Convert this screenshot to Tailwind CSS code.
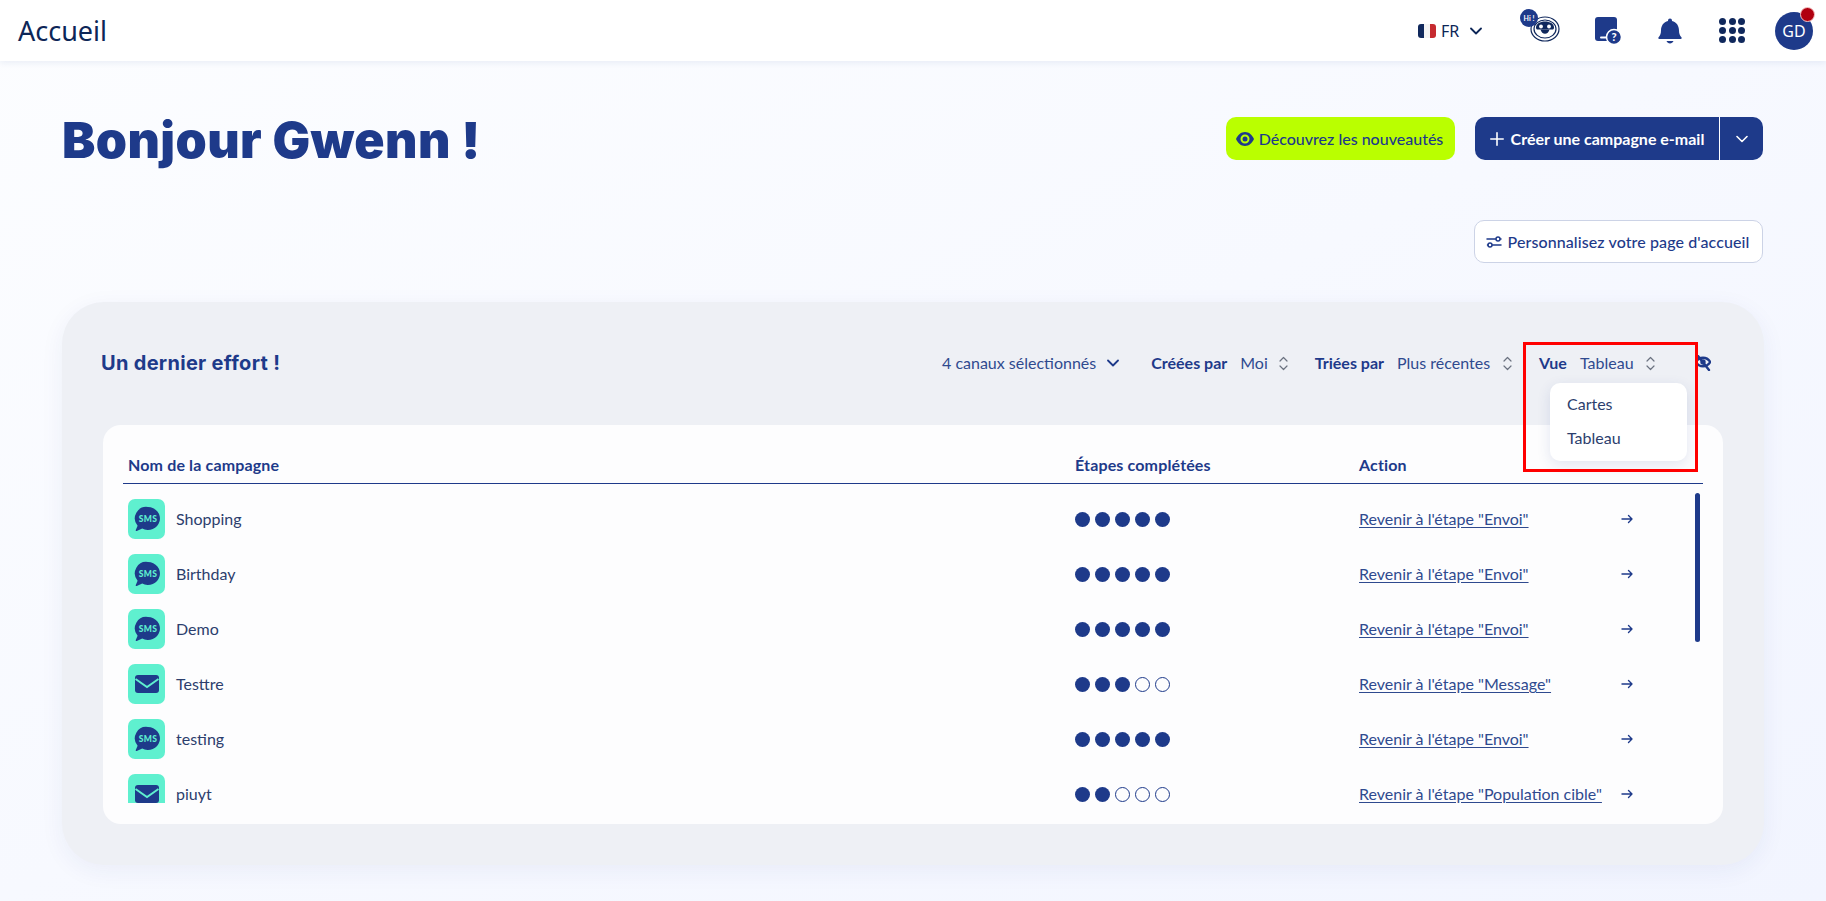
<!DOCTYPE html>
<html lang="fr">
<head>
<meta charset="utf-8">
<title>Accueil</title>
<script src="https://cdn.jsdelivr.net/npm/@tailwindcss/browser@4"></script>
</head>
<body class="m-0 h-[901px] w-[1826px] overflow-hidden bg-gradient-to-br from-[#fcfdff] to-[#f2f5ff] font-['Lato','Noto_Sans',sans-serif] text-[#1e3a8a]">
<header class="relative z-10 flex h-[61px] items-center bg-white pl-[18px] shadow-[0_2px_6px_rgba(30,58,138,0.08)]">
  <h1 class="text-[27px] leading-none font-normal text-[#0d2657] font-['Noto_Sans',sans-serif]">Accueil</h1>
  <div class="ml-auto flex items-center">
    <div class="flex items-center w-[65px] ml-0">
      <svg width="18" height="14" viewBox="0 0 18 14" class="shrink-0"><path d="M3 0h3v14H3a3 3 0 0 1-3-3V3a3 3 0 0 1 3-3z" fill="#10285c"/><rect x="6" width="6" height="14" fill="#f3f3f3"/><path d="M12 0h3a3 3 0 0 1 3 3v8a3 3 0 0 1-3 3h-3z" fill="#c62b30"/></svg>
      <span class="ml-[5px] text-[16px] text-[#0d2657] font-['Noto_Sans',sans-serif]">FR</span>
      <svg width="12" height="8" viewBox="0 0 12 8" class="ml-[11px] shrink-0" fill="none" stroke="#0d2657" stroke-width="1.8" stroke-linecap="round" stroke-linejoin="round"><path d="M1 1.500 6 6.500 11 1.500"/></svg>
    </div>
  </div>
  <div class="w-[92px] flex justify-start pl-[37px]">
    <svg width="40" height="33" viewBox="0 0 40 33" class="-mt-[10px]">
      <ellipse cx="25" cy="20" rx="14" ry="12" fill="#fff" stroke="#10285c" stroke-width="1.2"/>
      <ellipse cx="25" cy="20" rx="11" ry="9" fill="#fff" stroke="#10285c" stroke-width="1.2"/>
      <path d="M16 18.500c0-3.800 4-6 9-6s9 2.200 9 6c0 1.400-.6 2-1.600 2H17.600c-1 0-1.600-.6-1.600-2z" fill="#10285c"/>
      <circle cx="21" cy="17.500" r="1.900" fill="#fff"/><circle cx="29" cy="17.500" r="1.900" fill="#fff"/>
      <path d="M20.500 20.500h9c-.7 2.800-2.500 4.200-4.500 4.200s-3.800-1.400-4.500-4.200z" fill="#10285c"/>
      <circle cx="9" cy="9" r="9" fill="#1e3a8a"/>
      <text x="9" y="11.500" text-anchor="middle" font-size="7" font-weight="700" fill="#fff" font-family="Lato">Hi !</text>
    </svg>
  </div>
  <div class="w-[64px] flex justify-center">
    <svg width="28" height="27" viewBox="0 0 28 27">
      <rect x="2" y="0" width="22" height="24" rx="3" fill="#1e3a8a"/>
      <rect x="7" y="19.500" width="7" height="2" rx="1" fill="#fff"/>
      <circle cx="21" cy="20" r="7.500" fill="#1e3a8a" stroke="#fff" stroke-width="1.500"/>
      <text x="21" y="24" text-anchor="middle" font-size="11" font-weight="900" fill="#fff" font-family="Lato">?</text>
    </svg>
  </div>
  <div class="w-[62px] flex justify-center">
    <svg width="24" height="26" viewBox="0 0 24 26"><path d="M12 0.500a2 2 0 0 1 2 2v.6c4.400 1 7 4.800 7 9.400 0 3.200 1 5.300 2.400 6.700.6.700.3 1.800-.8 1.800H1.400c-1.100 0-1.400-1.100-.8-1.800C2 17.800 3 15.700 3 12.500c0-4.600 2.600-8.400 7-9.400v-.6a2 2 0 0 1 2-2z" fill="#1e3a8a"/><path d="M8.500 23h7c-.6 1.600-2 2.500-3.500 2.500S9.100 24.600 8.500 23z" fill="#1e3a8a"/></svg>
  </div>
  <div class="w-[62px] flex justify-center">
    <div class="grid grid-cols-3 gap-[2.300px]">
      <span class="size-[7px] rounded-full bg-[#10285c]"></span><span class="size-[7px] rounded-full bg-[#10285c]"></span><span class="size-[7px] rounded-full bg-[#10285c]"></span>
      <span class="size-[7px] rounded-full bg-[#10285c]"></span><span class="size-[7px] rounded-full bg-[#10285c]"></span><span class="size-[7px] rounded-full bg-[#10285c]"></span>
      <span class="size-[7px] rounded-full bg-[#10285c]"></span><span class="size-[7px] rounded-full bg-[#10285c]"></span><span class="size-[7px] rounded-full bg-[#10285c]"></span>
    </div>
  </div>
  <div class="relative ml-[12px] mr-[13px] flex size-[38px] items-center justify-center rounded-full bg-[#1e3a8a] text-[16px] font-['Noto_Sans',sans-serif] text-white">GD
    <span class="absolute -right-[2px] -top-[5px] size-[15px] rounded-full border border-[#f5c6c6] bg-[#b00010]"></span>
  </div>
</header>

<main class="px-[63px]">
  <div class="flex items-start pt-[56px] pr-0">
    <h2 class="text-[50px] leading-[64px] tracking-[0.4px] font-black font-['Inter',sans-serif] text-[#1e3a8a] -mt-[9px] -ml-[1px]">Bonjour Gwenn !</h2>
    <div class="ml-auto flex gap-[20px]">
      <button class="flex h-[43px] w-[229px] items-center justify-center gap-[5px] rounded-[10px] bg-[#baff00] pr-[2px] text-[16px] font-medium text-[#1e3a8a]">
        <svg width="18" height="14" viewBox="0 0 18 14"><path d="M9 0C5 0 1.800 2.800 0 7c1.800 4.200 5 7 9 7s7.200-2.800 9-7c-1.800-4.200-5-7-9-7zm0 11.500A4.500 4.500 0 1 1 9 2.500a4.500 4.500 0 0 1 0 9z" fill="#1e3a8a"/><circle cx="9" cy="7" r="2.500" fill="#1e3a8a"/></svg>
        Découvrez les nouveautés
      </button>
      <div class="flex h-[43px] w-[288px] overflow-hidden rounded-[10px] bg-[#1e3a8a] text-white">
        <button class="flex w-[245px] items-center justify-center gap-[7px] border-r border-white text-[16px] font-bold">
          <svg width="14" height="14" viewBox="0 0 14 14" stroke="#fff" stroke-width="1.600" stroke-linecap="round"><path d="M7 .8v12.400M.8 7h12.400"/></svg>
          Créer une campagne e-mail
        </button>
        <button class="flex flex-1 items-center justify-center">
          <svg width="12" height="8" viewBox="0 0 12 8" fill="none" stroke="#fff" stroke-width="1.600" stroke-linecap="round" stroke-linejoin="round"><path d="M1 1.500 6 6.500 11 1.500"/></svg>
        </button>
      </div>
    </div>
  </div>

  <div class="mt-[48px] flex justify-end">
    <button class="flex h-[43px] w-[289px] items-center justify-center gap-[6px] rounded-[10px] border border-[#ccd3e6] bg-white pr-[2px] text-[16px] tracking-[0.1px] font-medium text-[#1e3a8a]">
      <svg width="16" height="14" viewBox="0 0 16 14" fill="none" stroke="#1e3a8a" stroke-width="1.500" stroke-linecap="round"><path d="M1 4h8.500M14.500 4H15M1.500 10H2M6.500 10H15"/><circle cx="12" cy="4" r="2"/><circle cx="4" cy="10" r="2"/></svg>
      Personnalisez votre page d'accueil
    </button>
  </div>

  <section class="relative mx-[-1px] mt-[39px] h-[563px] rounded-[42px] bg-[#eef0f5] px-[41px] shadow-[0_6px_24px_rgba(30,58,138,0.06)]">
    <div class="flex h-[123px] items-start pt-[48px]">
      <h3 class="text-[20px] leading-[26px] tracking-[0.3px] font-bold font-['Inter',sans-serif] text-[#1e3a8a] -ml-[2px]">Un dernier effort !</h3>
      <div class="absolute left-[880px] top-[48px] flex h-[26px] items-center text-[16px] text-[#2f4a8f]">
        <span>4 canaux sélectionnés</span>
        <svg width="12" height="8" viewBox="0 0 12 8" class="ml-[11px]" fill="none" stroke="#1e3a8a" stroke-width="1.800" stroke-linecap="round" stroke-linejoin="round"><path d="M1 1.500 6 6.500 11 1.500"/></svg>
        <b class="ml-[32px] font-bold text-[#1e3a8a]">Créées par</b><span class="ml-[13px]">Moi</span>
        <svg width="9" height="15" viewBox="0 0 9 15" class="ml-[11px]" fill="none" stroke="#6b7280" stroke-width="1.200" stroke-linecap="round" stroke-linejoin="round"><path d="M1 5 4.500 1.500 8 5M1 10l3.500 3.500L8 10"/></svg>
        <b class="ml-[27px] font-bold text-[#1e3a8a]">Triées par</b><span class="ml-[13px]">Plus récentes</span>
        <svg width="9" height="15" viewBox="0 0 9 15" class="ml-[13px]" fill="none" stroke="#6b7280" stroke-width="1.200" stroke-linecap="round" stroke-linejoin="round"><path d="M1 5 4.500 1.500 8 5M1 10l3.500 3.500L8 10"/></svg>
        <b class="ml-[27px] font-bold text-[#1e3a8a]">Vue</b><span class="ml-[13px]">Tableau</span>
        <svg width="9" height="15" viewBox="0 0 9 15" class="ml-[12px]" fill="none" stroke="#6b7280" stroke-width="1.200" stroke-linecap="round" stroke-linejoin="round"><path d="M1 5 4.500 1.500 8 5M1 10l3.500 3.500L8 10"/></svg>
        <svg width="16" height="16" viewBox="0 0 16 16" class="ml-[40px]" fill="none" stroke="#1e3a8a" stroke-width="2.400" stroke-linecap="round"><path d="M.8 7C2.500 4.200 5 2.800 8 2.800s5.500 1.400 7.200 4.200c-1.700 2.800-4.200 4.200-7.200 4.200S2.500 9.800.8 7z"/><circle cx="8" cy="7" r="1.500"/><path d="M3 1l11 14"/></svg>
      </div>
    </div>

    <div class="relative h-[399px] rounded-[18px] bg-[#fdfdfe] px-[20px]">
      <div class="grid h-[59px] grid-cols-[947px_284px_1fr] items-end border-b border-[#1e3a8a] pb-[8px] pl-[5px] text-[16px] tracking-[0.15px] leading-[20px] font-bold text-[#1e3a8a]">
        <span>Nom de la campagne</span><span>Étapes complétées</span><span>Action</span>
      </div>
      <div class="h-[319px] overflow-hidden pt-[15px]">
        <div class="grid h-[55px] grid-cols-[947px_284px_1fr] pl-[5px] text-[16px]">
          <div class="flex h-[40px] items-center gap-[11px] text-[16px] text-[#2c3e6d]"><span class="flex size-[37px] h-[40px] items-center justify-center rounded-[7px] bg-[#5ff0cf]"><svg width="26" height="26" viewBox="0 0 26 26"><path d="M14 1a12 11.500 0 1 1-5.800 21.600L2.800 25c-.8.300-1.300-.3-1-1l1.800-4.200A11.500 11.500 0 0 1 14 1z" fill="#1e3a8a"/><text x="14" y="16" text-anchor="middle" font-size="8.500" font-weight="900" letter-spacing=".4" fill="#5ff0cf" font-family="Lato">SMS</text></svg></span>Shopping</div>
          <div class="flex h-[40px] items-center gap-[5px]"><i class="size-[15px] rounded-full bg-[#1e3a8a]"></i><i class="size-[15px] rounded-full bg-[#1e3a8a]"></i><i class="size-[15px] rounded-full bg-[#1e3a8a]"></i><i class="size-[15px] rounded-full bg-[#1e3a8a]"></i><i class="size-[15px] rounded-full bg-[#1e3a8a]"></i></div>
          <div class="flex h-[40px] items-center"><a class="w-[262px] underline underline-offset-2 text-[#2f4a8f]">Revenir à l'étape "Envoi"</a><svg width="12" height="10" viewBox="0 0 12 10" fill="none" stroke="#1e3a8a" stroke-width="1.400" stroke-linecap="round" stroke-linejoin="round"><path d="M1 5h10M7.500 1.500 11 5 7.500 8.500"/></svg></div>
        </div>
        <div class="grid h-[55px] grid-cols-[947px_284px_1fr] pl-[5px] text-[16px]">
          <div class="flex h-[40px] items-center gap-[11px] text-[16px] text-[#2c3e6d]"><span class="flex size-[37px] h-[40px] items-center justify-center rounded-[7px] bg-[#5ff0cf]"><svg width="26" height="26" viewBox="0 0 26 26"><path d="M14 1a12 11.500 0 1 1-5.800 21.600L2.800 25c-.8.300-1.300-.3-1-1l1.800-4.200A11.500 11.500 0 0 1 14 1z" fill="#1e3a8a"/><text x="14" y="16" text-anchor="middle" font-size="8.500" font-weight="900" letter-spacing=".4" fill="#5ff0cf" font-family="Lato">SMS</text></svg></span>Birthday</div>
          <div class="flex h-[40px] items-center gap-[5px]"><i class="size-[15px] rounded-full bg-[#1e3a8a]"></i><i class="size-[15px] rounded-full bg-[#1e3a8a]"></i><i class="size-[15px] rounded-full bg-[#1e3a8a]"></i><i class="size-[15px] rounded-full bg-[#1e3a8a]"></i><i class="size-[15px] rounded-full bg-[#1e3a8a]"></i></div>
          <div class="flex h-[40px] items-center"><a class="w-[262px] underline underline-offset-2 text-[#2f4a8f]">Revenir à l'étape "Envoi"</a><svg width="12" height="10" viewBox="0 0 12 10" fill="none" stroke="#1e3a8a" stroke-width="1.400" stroke-linecap="round" stroke-linejoin="round"><path d="M1 5h10M7.500 1.500 11 5 7.500 8.500"/></svg></div>
        </div>
        <div class="grid h-[55px] grid-cols-[947px_284px_1fr] pl-[5px] text-[16px]">
          <div class="flex h-[40px] items-center gap-[11px] text-[16px] text-[#2c3e6d]"><span class="flex size-[37px] h-[40px] items-center justify-center rounded-[7px] bg-[#5ff0cf]"><svg width="26" height="26" viewBox="0 0 26 26"><path d="M14 1a12 11.500 0 1 1-5.800 21.600L2.800 25c-.8.300-1.300-.3-1-1l1.800-4.200A11.500 11.500 0 0 1 14 1z" fill="#1e3a8a"/><text x="14" y="16" text-anchor="middle" font-size="8.500" font-weight="900" letter-spacing=".4" fill="#5ff0cf" font-family="Lato">SMS</text></svg></span>Demo</div>
          <div class="flex h-[40px] items-center gap-[5px]"><i class="size-[15px] rounded-full bg-[#1e3a8a]"></i><i class="size-[15px] rounded-full bg-[#1e3a8a]"></i><i class="size-[15px] rounded-full bg-[#1e3a8a]"></i><i class="size-[15px] rounded-full bg-[#1e3a8a]"></i><i class="size-[15px] rounded-full bg-[#1e3a8a]"></i></div>
          <div class="flex h-[40px] items-center"><a class="w-[262px] underline underline-offset-2 text-[#2f4a8f]">Revenir à l'étape "Envoi"</a><svg width="12" height="10" viewBox="0 0 12 10" fill="none" stroke="#1e3a8a" stroke-width="1.400" stroke-linecap="round" stroke-linejoin="round"><path d="M1 5h10M7.500 1.500 11 5 7.500 8.500"/></svg></div>
        </div>
        <div class="grid h-[55px] grid-cols-[947px_284px_1fr] pl-[5px] text-[16px]">
          <div class="flex h-[40px] items-center gap-[11px] text-[16px] text-[#2c3e6d]"><span class="flex size-[37px] h-[40px] items-center justify-center rounded-[7px] bg-[#5ff0cf]"><svg width="24" height="18" viewBox="0 0 24 18"><rect width="24" height="18" rx="3" fill="#1e3a8a"/><path d="M0.500 4 12 12 23.500 4" fill="none" stroke="#5ff0cf" stroke-width="2"/></svg></span>Testtre</div>
          <div class="flex h-[40px] items-center gap-[5px]"><i class="size-[15px] rounded-full bg-[#1e3a8a]"></i><i class="size-[15px] rounded-full bg-[#1e3a8a]"></i><i class="size-[15px] rounded-full bg-[#1e3a8a]"></i><i class="size-[15px] rounded-full border border-[#1e3a8a]"></i><i class="size-[15px] rounded-full border border-[#1e3a8a]"></i></div>
          <div class="flex h-[40px] items-center"><a class="w-[262px] underline underline-offset-2 text-[#2f4a8f]">Revenir à l'étape "Message"</a><svg width="12" height="10" viewBox="0 0 12 10" fill="none" stroke="#1e3a8a" stroke-width="1.400" stroke-linecap="round" stroke-linejoin="round"><path d="M1 5h10M7.500 1.500 11 5 7.500 8.500"/></svg></div>
        </div>
        <div class="grid h-[55px] grid-cols-[947px_284px_1fr] pl-[5px] text-[16px]">
          <div class="flex h-[40px] items-center gap-[11px] text-[16px] text-[#2c3e6d]"><span class="flex size-[37px] h-[40px] items-center justify-center rounded-[7px] bg-[#5ff0cf]"><svg width="26" height="26" viewBox="0 0 26 26"><path d="M14 1a12 11.500 0 1 1-5.800 21.600L2.800 25c-.8.300-1.300-.3-1-1l1.800-4.200A11.500 11.500 0 0 1 14 1z" fill="#1e3a8a"/><text x="14" y="16" text-anchor="middle" font-size="8.500" font-weight="900" letter-spacing=".4" fill="#5ff0cf" font-family="Lato">SMS</text></svg></span>testing</div>
          <div class="flex h-[40px] items-center gap-[5px]"><i class="size-[15px] rounded-full bg-[#1e3a8a]"></i><i class="size-[15px] rounded-full bg-[#1e3a8a]"></i><i class="size-[15px] rounded-full bg-[#1e3a8a]"></i><i class="size-[15px] rounded-full bg-[#1e3a8a]"></i><i class="size-[15px] rounded-full bg-[#1e3a8a]"></i></div>
          <div class="flex h-[40px] items-center"><a class="w-[262px] underline underline-offset-2 text-[#2f4a8f]">Revenir à l'étape "Envoi"</a><svg width="12" height="10" viewBox="0 0 12 10" fill="none" stroke="#1e3a8a" stroke-width="1.400" stroke-linecap="round" stroke-linejoin="round"><path d="M1 5h10M7.500 1.500 11 5 7.500 8.500"/></svg></div>
        </div>
        <div class="grid h-[55px] grid-cols-[947px_284px_1fr] pl-[5px] text-[16px]">
          <div class="flex h-[40px] items-center gap-[11px] text-[16px] text-[#2c3e6d]"><span class="flex size-[37px] h-[40px] items-center justify-center rounded-[7px] bg-[#5ff0cf]"><svg width="24" height="18" viewBox="0 0 24 18"><rect width="24" height="18" rx="3" fill="#1e3a8a"/><path d="M0.500 4 12 12 23.500 4" fill="none" stroke="#5ff0cf" stroke-width="2"/></svg></span>piuyt</div>
          <div class="flex h-[40px] items-center gap-[5px]"><i class="size-[15px] rounded-full bg-[#1e3a8a]"></i><i class="size-[15px] rounded-full bg-[#1e3a8a]"></i><i class="size-[15px] rounded-full border border-[#1e3a8a]"></i><i class="size-[15px] rounded-full border border-[#1e3a8a]"></i><i class="size-[15px] rounded-full border border-[#1e3a8a]"></i></div>
          <div class="flex h-[40px] items-center"><a class="w-[262px] underline underline-offset-2 text-[#2f4a8f]">Revenir à l'étape "Population cible"</a><svg width="12" height="10" viewBox="0 0 12 10" fill="none" stroke="#1e3a8a" stroke-width="1.400" stroke-linecap="round" stroke-linejoin="round"><path d="M1 5h10M7.500 1.500 11 5 7.500 8.500"/></svg></div>
        </div>
      </div>
      <span class="absolute right-[23px] top-[68px] h-[149px] w-[5px] rounded-full bg-[#1e3a8a]"></span>
    </div>

    <div class="absolute left-[1488px] top-[81px] z-20 w-[137px] rounded-[10px] bg-white pt-[4px] pb-[6px] text-[#2c3e6d] shadow-[0_4px_14px_rgba(30,58,138,0.12)]">
      <div class="flex h-[34px] items-center pl-[17px] text-[16px]">Cartes</div>
      <div class="flex h-[34px] items-center pl-[17px] text-[16px]">Tableau</div>
    </div>
    <div class="absolute left-[1461px] top-[40px] z-30 h-[130px] w-[175px] border-[3px] border-[#ff0000]"></div>
  </section>
</main>
</body>
</html>
